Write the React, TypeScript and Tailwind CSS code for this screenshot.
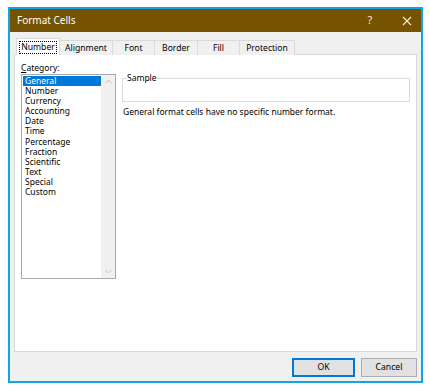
import React from "react";

const categories = [
  "General",
  "Number",
  "Currency",
  "Accounting",
  "Date",
  "Time",
  "Percentage",
  "Fraction",
  "Scientific",
  "Text",
  "Special",
  "Custom",
];

const tabs = [
  { name: "Number", w: "w-[44px]" },
  { name: "Alignment", w: "w-[53px]" },
  { name: "Font", w: "w-[42px]" },
  { name: "Border", w: "w-[43px]" },
  { name: "Fill", w: "w-[42px]" },
  { name: "Protection", w: "w-[55px]" },
];

export default function App() {
  return (
    <div
      className="w-[429px] h-[390px] bg-white pt-[7px] pl-[8px]"
      style={{ fontFamily: '"Noto Sans", "Open Sans", sans-serif' }}
    >
      <div className="w-[415px] h-[376px] border-2 border-[#14a3e6] bg-[#f0f0f0] flex flex-col">
        {/* Title bar */}
        <div className="h-[23px] bg-[#765300] flex items-center pl-[7px] text-white text-[10px]">
          <span className="flex-1">Format Cells</span>
          <span className="w-[10px] text-center mr-[27px] text-[11px] text-[#f2e8d5]">?</span>
          <svg width="10" height="10" viewBox="0 0 10 10" className="mr-[9px]">
            <path d="M1 1 L9 9 M9 1 L1 9" stroke="#f5eede" strokeWidth="1.1" />
          </svg>
        </div>

        {/* Tabs */}
        <div className="flex items-end pl-[6px] mt-[6px] h-[17px] text-[8.6px] text-black relative z-10">
          {tabs.map((t, i) =>
            i === 0 ? (
              <div
                key={t.name}
                className={`${t.w} h-[17px] bg-white border border-[#d9d9d9] border-b-0 flex items-center justify-center`}
              >
                <span className="border border-dotted border-black px-[1px] leading-[11px]">{t.name}</span>
              </div>
            ) : (
              <div
                key={t.name}
                className={`${t.w} h-[15px] bg-[#f0f0f0] border border-[#d9d9d9] border-b-0 border-l-0 flex items-center justify-center`}
              >
                {t.name}
              </div>
            )
          )}
        </div>

        {/* Panel */}
        <div className="mx-[4px] h-[298px] bg-white border border-[#d9d9d9] -mt-px flex pt-[7px] pl-[6px] text-[8.5px] text-black">
          <div className="flex flex-col">
            <div className="leading-[11px]">
              <span className="underline">C</span>ategory:
            </div>
            <div className="w-[95px] h-[205px] border border-[#a6a9ae] flex mt-[1px]">
              <div className="flex-1 pt-[1px] pl-[1px]">
                {categories.map((c, i) => (
                  <div
                    key={c}
                    className={`h-[10.1px] leading-[10px] pl-[2px] ${
                      i === 0 ? "bg-[#0078d7] text-white" : ""
                    }`}
                  >
                    {c}
                  </div>
                ))}
              </div>
              <div className="w-[14px] bg-[#f0f0f0] flex flex-col justify-between items-center py-[4px]">
                <svg width="7" height="5" viewBox="0 0 7 5">
                  <path d="M0.5 4 L3.5 1 L6.5 4" stroke="#c2c2c2" fill="none" strokeWidth="1" />
                </svg>
                <svg width="7" height="5" viewBox="0 0 7 5">
                  <path d="M0.5 1 L3.5 4 L6.5 1" stroke="#c2c2c2" fill="none" strokeWidth="1" />
                </svg>
              </div>
            </div>
          </div>

          <div className="flex flex-col ml-[6px] mt-[10px]">
            <fieldset className="w-[288px] h-[30px] border border-[#dcdcdc] px-[4px]">
              <legend className="px-0 leading-[12px]">Sample</legend>
            </fieldset>
            <div className="mt-[4px] ml-[1px] leading-[12px]">
              General format cells have no specific number format.
            </div>
          </div>
        </div>

        {/* Buttons */}
        <div className="flex justify-end gap-[6px] mt-[6px] pr-[4px] text-[8.6px] text-black">
          <button className="w-[63px] h-[19px] bg-[#e1e1e1] border border-[#0078d7] outline outline-1 outline-[#0078d7] -outline-offset-2">
            OK
          </button>
          <button className="w-[56px] h-[19px] bg-[#e1e1e1] border border-[#adadad]">Cancel</button>
        </div>
      </div>
    </div>
  );
}
